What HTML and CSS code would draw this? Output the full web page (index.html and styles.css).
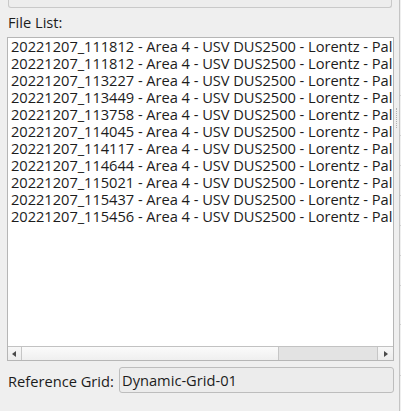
FILE: index.html
```html
<!DOCTYPE html>
<html>
<head>
<meta charset="utf-8">
<link rel="stylesheet" href="styles.css">
</head>
<body>
<div class="app">
  <div class="main">
    <div class="topbox"></div>
    <div class="label file-label">File List:</div>
    <div class="listbox">
      <div class="rows">
        <div class="row">20221207_111812 - Area 4 - USV DUS2500 - Lorentz - Pal</div>
        <div class="row">20221207_111812 - Area 4 - USV DUS2500 - Lorentz - Pal</div>
        <div class="row">20221207_113227 - Area 4 - USV DUS2500 - Lorentz - Pal</div>
        <div class="row">20221207_113449 - Area 4 - USV DUS2500 - Lorentz - Pal</div>
        <div class="row">20221207_113758 - Area 4 - USV DUS2500 - Lorentz - Pal</div>
        <div class="row">20221207_114045 - Area 4 - USV DUS2500 - Lorentz - Pal</div>
        <div class="row">20221207_114117 - Area 4 - USV DUS2500 - Lorentz - Pal</div>
        <div class="row">20221207_114644 - Area 4 - USV DUS2500 - Lorentz - Pal</div>
        <div class="row">20221207_115021 - Area 4 - USV DUS2500 - Lorentz - Pal</div>
        <div class="row">20221207_115437 - Area 4 - USV DUS2500 - Lorentz - Pal</div>
        <div class="row">20221207_115456 - Area 4 - USV DUS2500 - Lorentz - Pal</div>
      </div>
      <div class="hscroll">
        <div class="sbtn sbtn-left"><span class="tri tri-left"></span></div>
        <div class="trough">
          <div class="handle"></div>
        </div>
        <div class="sbtn sbtn-right"><span class="tri tri-right"></span></div>
      </div>
    </div>
    <div class="refrow">
      <div class="label ref-label">Reference Grid:</div>
      <div class="lineedit">Dynamic-Grid-01</div>
    </div>
  </div>
  <div class="splitter">
    <div class="grip"></div>
  </div>
  <div class="side">
    <div class="tick t1"></div>
    <div class="tick t2"></div>
    <div class="tick t3"></div>
    <div class="tick t3"></div>
    <div class="tick t3"></div>
    <div class="tick t3"></div>
    <div class="tick t3"></div>
    <div class="tick t4"></div>
    <div class="tick t5"></div>
  </div>
</div>
</body>
</html>
```

FILE: styles.css
```css
html, body {
  margin: 0;
  padding: 0;
  background: #efefef;
}
body {
  font-family: "Open Sans", "DejaVu Sans", sans-serif;
  font-size: 14.67px;
  line-height: 17px;
  color: #1c1c1c;
  overflow: hidden;
}
.app {
  display: flex;
  height: 411px;
  width: 401px;
}
.main {
  width: 387px;
  padding-left: 7px;
  display: flex;
  flex-direction: column;
}
.topbox {
  height: 7px;
  margin: 0 2px 0 1px;
  border: 1px solid #c9c9c9;
  border-top: none;
  border-radius: 0 0 3px 3px;
  background: #ededed;
}
.file-label {
  margin-top: 6px;
  margin-left: 1px;
  height: 17px;
  margin-bottom: 6px;
}
.listbox {
  height: 322px;
  border: 1px solid #b6b6b6;
  background: #ffffff;
  display: flex;
  flex-direction: column;
}
.rows {
  flex: 1;
  padding-left: 3px;
}
.row {
  height: 17px;
  white-space: nowrap;
  letter-spacing: -0.04px;
}
.hscroll {
  height: 13px;
  border-top: 1px solid #c2c2c2;
  display: flex;
  background: #e3e3e3;
}
.sbtn {
  width: 13px;
  background: linear-gradient(#f7f7f7, #ececec);
  display: flex;
  align-items: center;
  justify-content: center;
}
.sbtn-left {
  border-right: 1px solid #c6c6c6;
}
.sbtn-right {
  width: 15px;
  border-left: 1px solid #c6c6c6;
}
.tri {
  width: 0;
  height: 0;
  border-top: 3px solid transparent;
  border-bottom: 3px solid transparent;
}
.tri-left {
  border-right: 4px solid #4a4a4a;
  margin-right: 1px;
}
.tri-right {
  border-left: 4px solid #4a4a4a;
  margin-left: 1px;
}
.trough {
  flex: 1;
  display: flex;
}
.handle {
  width: 256px;
  border-right: 1px solid #c6c6c6;
  background: linear-gradient(#fbfbfb, #efefef);
}
.refrow {
  margin-top: 6px;
  display: flex;
  align-items: center;
}
.ref-label {
  width: 111px;
  margin-left: 1px;
  white-space: nowrap;
  padding-top: 2px;
}
.lineedit {
  flex: 1;
  height: 24px;
  border: 1px solid #bdbdbd;
  border-radius: 3px;
  background: #ececec;
  padding-left: 2px;
  display: flex;
  align-items: center;
  white-space: nowrap;
}
.splitter {
  width: 5px;
}
.grip {
  margin: 108px 0 0 2px;
  width: 0;
  height: 20px;
  border-left: 1px dotted #b0b0b0;
}
.side {
  width: 1px;
  border-left: 1px solid #c4c4c4;
}
.tick {
  height: 29px;
  border-bottom: 1px solid #d0d0d0;
}
.t1 {
  height: 95px;
}
.t2 {
  height: 39px;
}
.t4 {
  height: 38px;
}
.t5 {
  height: 50px;
}
```
